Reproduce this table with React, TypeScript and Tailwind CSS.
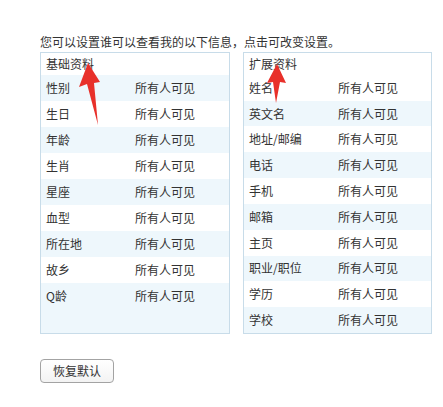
import React from "react";

const basic = ["性别", "生日", "年龄", "生肖", "星座", "血型", "所在地", "故乡", "Q龄"];
const extended = ["姓名", "英文名", "地址/邮编", "电话", "手机", "邮箱", "主页", "职业/职位", "学历", "学校"];

const Panel = ({ title, items, blueFirst, width }: { title: string; items: string[]; blueFirst: boolean; width: string }) => (
  <div className={`${width} h-[282px] border border-[#c8dce9] bg-[#eef7fc] flex flex-col`}>
    <div className="h-[22px] bg-white flex items-center pl-[5px] leading-none">{title}</div>
    {items.map((label, i) => {
      const blue = blueFirst ? i % 2 === 0 : i % 2 === 1;
      return (
        <div key={label} className={`h-[26px] flex items-center pl-[5px] ${blue ? "bg-[#eef7fc]" : "bg-white"}`}>
          <span className="w-[89px]">{label}</span>
          <span>所有人可见</span>
        </div>
      );
    })}
  </div>
);

export default function App() {
  return (
    <div
      className="relative w-[443px] h-[407px] bg-white pl-[40px] pt-[34px] text-[12px] text-[#333]"
      style={{ fontFamily: '"Noto Sans CJK SC", "Noto Sans", sans-serif' }}
    >
      <div className="h-[16px] leading-[16px]">您可以设置谁可以查看我的以下信息，点击可改变设置。</div>
      <div className="mt-[2px] flex gap-[13px]">
        <Panel title="基础资料" items={basic} blueFirst={true} width="w-[190px]" />
        <Panel title="扩展资料" items={extended} blueFirst={false} width="w-[189px]" />
      </div>
      <button
        type="button"
        className="mt-[25px] w-[74px] h-[24px] rounded-[4px] border border-[#a3a3a3] bg-gradient-to-b from-white to-[#f3f3f3] text-[12px] text-[#333] leading-none"
      >
        恢复默认
      </button>

      {/* red annotation arrows */}
      <svg className="absolute left-0 top-0 pointer-events-none" width="443" height="407">
        <polygon points="88,63 100,82 94,83 98,125 87,84 79,87" fill="#e8302a" />
        <polygon points="277,64 286,83 280,82 276,103 273,82 267,83" fill="#e8302a" />
      </svg>
    </div>
  );
}
